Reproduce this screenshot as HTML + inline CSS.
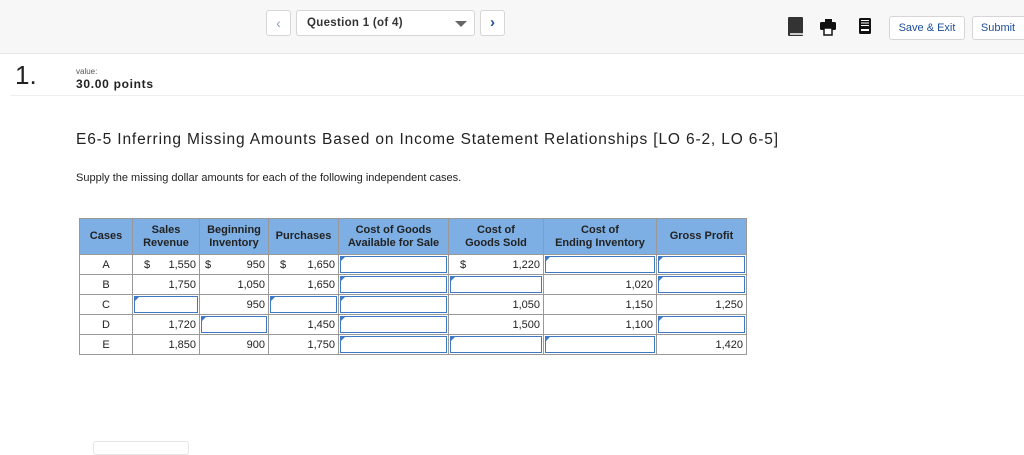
<!DOCTYPE html>
<html><head><style>
body{margin:0;width:1024px;height:450px;overflow:hidden;background:#fff;font-family:"Liberation Sans",Arial,sans-serif;position:relative}
.top{position:absolute;left:0;top:0;width:1024px;height:53px;background:#f7f7f7;border-bottom:1px solid #e6e6e6}
.btn{position:absolute;background:#fff;border:1px solid #d6d6d6;border-radius:3px;box-sizing:border-box}
.t{position:absolute;white-space:nowrap}
table{position:absolute;left:79px;top:218px;border-collapse:collapse;table-layout:fixed;font-size:11px;color:#222}
td{border:1px solid #999;height:20px;padding:0 3px;text-align:right;position:relative;box-sizing:border-box}
th{background:#7eafe4;border:1px solid #999;font-size:11px;font-weight:bold;height:35px;line-height:13px;padding:0;color:#222}
td.c{text-align:center}
td.in{padding:0}
td.in div{position:absolute;left:1px;top:1px;right:1px;bottom:1px;border:1px solid #3f78c6;background:#fff}
td.in div:before{content:"";position:absolute;left:0;top:0;border-top:4px solid #3f78c6;border-right:4px solid transparent}
.d{float:left;padding-left:8px}
</style></head><body>
<div class="top"></div>
<div class="btn" style="left:266px;top:10px;width:25px;height:26px;color:#8aa0c0;font-size:14px;text-align:center;line-height:24px">&#8249;</div>
<div class="btn" style="left:296px;top:10px;width:179px;height:26px"></div>
<div class="t" style="left:307px;top:17px;font-size:11.5px;color:#333;font-weight:bold;letter-spacing:0.3px">Question 1 (of 4)</div>
<div style="position:absolute;left:455px;top:21px;border-top:6px solid #666;border-left:6px solid transparent;border-right:6px solid transparent"></div>
<div class="btn" style="left:480px;top:10px;width:25px;height:26px;color:#1e4f9c;font-size:15px;font-weight:bold;text-align:center;line-height:23px">&#8250;</div>
<svg style="position:absolute;left:786px;top:16px" width="60" height="22">
<rect x="2" y="1" width="15" height="19" rx="1" fill="#333"/><rect x="4" y="17" width="13" height="2" fill="#ccc"/>
<rect x="39" y="3" width="7" height="3" fill="#111"/><rect x="34" y="6" width="16" height="8" rx="1.5" fill="#111"/><rect x="38" y="12" width="8" height="7" fill="#fff" stroke="#111" stroke-width="1.5"/>
</svg>
<svg style="position:absolute;left:856px;top:16px" width="20" height="22">
<rect x="3" y="2" width="12" height="16" rx="1.5" fill="#111"/><rect x="5" y="4" width="8" height="1" fill="#fff"/><rect x="5" y="6.5" width="8" height="1" fill="#fff"/><rect x="5" y="9" width="8" height="1" fill="#fff"/><rect x="5" y="13" width="8" height="2" fill="#fff"/>
</svg>
<div class="btn" style="left:889px;top:16px;width:76px;height:24px;color:#1e4f9c;font-size:11px;text-align:center;line-height:22px">Save &amp; Exit</div>
<div class="btn" style="left:972px;top:16px;width:56px;height:24px;color:#1e4f9c;font-size:11px;text-align:center;line-height:22px;padding-right:4px">Submit</div>
<div class="t" style="left:15px;top:60px;font-size:26px;color:#222">1.</div>
<div class="t" style="left:76px;top:67px;font-size:8px;color:#555">value:</div>
<div class="t" style="left:76px;top:77px;font-size:12px;color:#222;font-weight:bold;letter-spacing:0.7px">30.00 points</div>
<div style="position:absolute;left:10px;top:95px;width:1014px;height:1px;background:#eee"></div>
<div class="t" style="left:76px;top:131px;font-size:15.5px;color:#222;letter-spacing:0.85px">E6-5 Inferring Missing Amounts Based on Income Statement Relationships [LO 6-2, LO 6-5]</div>
<div class="t" style="left:76px;top:172px;font-size:11px;color:#222">Supply the missing dollar amounts for each of the following independent cases.</div>
<table>
<colgroup><col style="width:53px"><col style="width:67px"><col style="width:69px"><col style="width:70px"><col style="width:110px"><col style="width:95px"><col style="width:113px"><col style="width:90px"></colgroup>
<tr><th>Cases</th><th>Sales<br>Revenue</th><th>Beginning<br>Inventory</th><th>Purchases</th><th>Cost of Goods<br>Available for Sale</th><th>Cost of<br>Goods Sold</th><th>Cost of<br>Ending Inventory</th><th>Gross Profit</th></tr>
<tr><td class="c">A</td><td><span class="d">$</span>1,550</td><td><span class="d" style="padding-left:2px">$</span>950</td><td><span class="d" style="padding-left:8px">$</span>1,650</td><td class="in"><div></div></td><td><span class="d">$</span>1,220</td><td class="in"><div></div></td><td class="in"><div></div></td></tr>
<tr><td class="c">B</td><td>1,750</td><td>1,050</td><td>1,650</td><td class="in"><div></div></td><td class="in"><div></div></td><td>1,020</td><td class="in"><div></div></td></tr>
<tr><td class="c">C</td><td class="in"><div></div></td><td>950</td><td class="in"><div></div></td><td class="in"><div></div></td><td>1,050</td><td>1,150</td><td>1,250</td></tr>
<tr><td class="c">D</td><td>1,720</td><td class="in"><div></div></td><td>1,450</td><td class="in"><div></div></td><td>1,500</td><td>1,100</td><td class="in"><div></div></td></tr>
<tr><td class="c">E</td><td>1,850</td><td>900</td><td>1,750</td><td class="in"><div></div></td><td class="in"><div></div></td><td class="in"><div></div></td><td>1,420</td></tr>
</table>
<div style="position:absolute;left:93px;top:441px;width:94px;height:12px;border:1px solid #e6e6e6;border-radius:3px"></div>
</body></html>
